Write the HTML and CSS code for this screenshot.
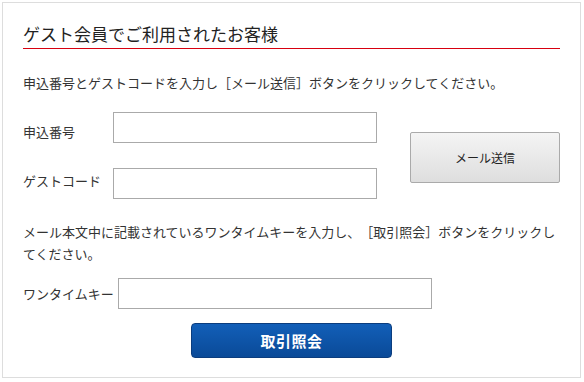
FILE: index.html
```html
<!DOCTYPE html>
<html>
<head>
<meta charset="UTF-8">
<title>ゲスト会員でご利用されたお客様</title>

<link rel="stylesheet" href="styles.css">

</head>
<body>

<!-- ゲスト会員 取引照会 -->
<div class="box">
	<h2 class="title">ゲスト会員でご利用されたお客様</h2>

	<p class="guide">申込番号とゲストコードを入力し［メール送信］ボタンをクリックしてください。</p>

	<div class="sendArea">
		<div class="fields">
			<label class="lbl lblTop" for="txtNo">申込番号</label>
			<input type="text" id="txtNo" class="txt">
			<label class="lbl lblBottom" for="txtCode">ゲストコード</label>
			<input type="text" id="txtCode" class="txt">
		</div>
		<button type="button" class="btnMail">メール送信</button>
	</div>

	<p class="guide guide2">メール本文中に記載されているワンタイムキーを入力し、［取引照会］ボタンをクリックしてください。</p>

	<div class="keyRow">
		<label class="lbl" for="txtKey">ワンタイムキー</label>
		<input type="text" id="txtKey" class="txt txtKey">
	</div>

	<div class="btnRow">
		<button type="button" class="btnSearch">取引照会</button>
	</div>
</div>

</body>
</html>
```

FILE: styles.css
```css
* {box-sizing: border-box;}
body {margin: 0; font-family: "Noto Sans CJK JP", "Liberation Sans", sans-serif; color: #333333; background: #ffffff; text-spacing-trim: space-all;}

.box {margin: 2px; width: 579px; height: 376px; border: 1px solid #dddddd; padding: 0 20px;}

.title {margin: 19px 0 0; padding-bottom: 2px; font-size: 17px; font-weight: normal; line-height: 24px; border-bottom: 1px solid #d7000f; color: #222222;}

.guide {margin: 23px 0 0; font-size: 13px; line-height: 22px;}
.guide2 {margin-top: 22px;}

.sendArea {display: flex; align-items: center; margin-top: 18px;}
.fields {display: grid; grid-template-columns: 90px 264px; grid-template-rows: 31px 31px; row-gap: 25px; align-items: center;}
.lbl {font-size: 13px; line-height: 20px;}
.lblTop {position: relative; top: 4px;}
.lblBottom {position: relative; top: -3px;}

.txt {width: 264px; height: 31px; border: 1px solid #aaaaaa; border-radius: 0; padding: 0 6px; font-size: 13px; background: #ffffff;}
.txt:focus {outline: none; border-color: #7799cc;}

.btnMail {margin-left: 33px; margin-top: 4px; width: 151px; height: 51px; border: 1px solid #aaaaaa; border-radius: 2px; background: linear-gradient(#f4f4f4, #dedede); font-family: inherit; font-size: 12px; color: #222222; cursor: pointer;}
.btnMail:hover {background: linear-gradient(#fafafa, #e6e6e6);}

.keyRow {display: flex; align-items: center; gap: 4px; margin-top: 13px;}
.txtKey {width: 314px;}

.btnRow {display: flex; justify-content: center; margin-top: 14px;}
.btnSearch {width: 201px; height: 35px; border: 1px solid #0b3d7e; border-radius: 4px; background: linear-gradient(#125fb8, #0a4a98); color: #ffffff; font-family: inherit; font-size: 15px; font-weight: bold; letter-spacing: 0.5px; cursor: pointer;}
.btnSearch:hover {background: linear-gradient(#1a6cc8, #0d55aa);}
```
